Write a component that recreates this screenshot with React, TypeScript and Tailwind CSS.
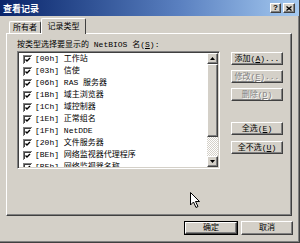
import React from 'react';

const rows = [
  ['[00h]', '工作站'],
  ['[03h]', '信使'],
  ['[06h]', 'RAS 服务器'],
  ['[1Bh]', '域主浏览器'],
  ['[1Ch]', '域控制器'],
  ['[1Eh]', '正常组名'],
  ['[1Fh]', 'NetDDE'],
  ['[20h]', '文件服务器'],
  ['[BEh]', '网络监视器代理程序'],
  ['[BFh]', '网络监视器名称'],
];

const raised =
  'border border-t-white border-l-white border-r-[#404040] border-b-[#404040] shadow-[inset_-1px_-1px_#808080] bg-[#d4d0c8]';

const Check = () => (
  <svg width="9" height="9" viewBox="0 0 9 9" className="shrink-0">
    <rect x="0" y="0" width="9" height="9" fill="#808080" />
    <rect x="1" y="1" width="8" height="8" fill="#ffffff" />
    <rect x="1" y="1" width="7" height="7" fill="#404040" />
    <rect x="2" y="2" width="6" height="6" fill="#ffffff" />
    <path d="M2.5 4.5 L4 6 L7 3" stroke="#000" strokeWidth="1.4" fill="none" />
  </svg>
);

function Btn({
  children,
  disabled,
  className = '',
}: {
  children: React.ReactNode;
  disabled?: boolean;
  className?: string;
}) {
  return (
    <div
      className={`${raised} flex items-center justify-center text-[8px] leading-none ${
        disabled ? 'text-[#808080] [text-shadow:1px_1px_0_#fff]' : 'text-black'
      } ${className}`}
    >
      {children}
    </div>
  );
}

export default function App() {
  return (
    <div className="relative w-[300px] h-[243px] overflow-hidden bg-[#d4d0c8] border-r border-b border-r-[#404040] border-b-[#404040] shadow-[inset_-1px_-1px_#808080] font-['Liberation_Mono','Noto_Sans_CJK_SC',monospace] text-black">
      {/* title bar */}
      <div className="h-[16px] flex items-center justify-between pl-[3px] pr-[4px] bg-gradient-to-r from-[#0a246a] via-[#5a80c0] via-60% to-[#a6caf0]">
        <span className="text-white font-bold text-[9px] leading-none font-['Noto_Sans_CJK_SC',sans-serif]">查看记录</span>
        <div className="flex items-center gap-[2px]">
          <div className={`${raised} w-[11px] h-[10px] flex items-center justify-center text-[8px] font-bold leading-none font-['Liberation_Sans',sans-serif]`}>?</div>
          <div className={`${raised} w-[12px] h-[10px] flex items-center justify-center`}>
            <svg width="6" height="5" viewBox="0 0 6 5">
              <path d="M0.5 0.5 L5.5 4.5 M5.5 0.5 L0.5 4.5" stroke="#000" strokeWidth="1.3" />
            </svg>
          </div>
        </div>
      </div>

      {/* tabs */}
      <div className="pl-[6px] pt-[2px]">
        <div className="flex items-end h-[15px] pl-[3px]">
          <div className="h-[12px] w-[32px] border-t border-l border-r border-t-white border-l-white border-r-[#404040] rounded-t-[2px] flex items-center justify-center text-[8px] leading-none">
            所有者
          </div>
          <div className="relative z-10 -mb-[1px] h-[16px] w-[45px] bg-[#d4d0c8] border-t border-l border-r border-t-white border-l-white border-r-[#404040] rounded-t-[2px] flex items-center justify-center text-[8px] leading-none">
            记录类型
          </div>
        </div>

        {/* panel */}
        <div className={`${raised} w-[286px] h-[183px] pl-[10px] pt-[5px]`}>
          <div className="h-[12px] text-[8px] leading-[12px] whitespace-nowrap">
            按类型选择要显示的 NetBIOS 名(<u>S</u>):
          </div>
          <div className="flex">
            {/* list */}
            <div className="w-[203px] h-[118px] flex border border-t-[#808080] border-l-[#808080] border-r-white border-b-white shadow-[inset_1px_1px_#404040,inset_-1px_-1px_#d4d0c8] p-[1px]">
              <div className="flex-1 bg-white overflow-hidden">
                {rows.map(([code, name]) => (
                  <div key={code} className="h-[12px] flex items-center pl-[4px] gap-[3px] text-[8px] leading-none whitespace-nowrap">
                    <Check />
                    <span>{code} {name}</span>
                  </div>
                ))}
              </div>
              <div className="w-[11px] flex flex-col bg-[#ece9e2]">
                <div className={`${raised} h-[11px] flex items-center justify-center`}>
                  <svg width="5" height="3" viewBox="0 0 5 3"><path d="M2.5 0 L5 3 L0 3 Z" fill="#000" /></svg>
                </div>
                <div className={`${raised} h-[73px]`} />
                <div className="flex-1 bg-[repeating-conic-gradient(#ffffff_0_25%,#d4d0c8_0_50%)] bg-[length:2px_2px]" />
                <div className={`${raised} h-[11px] flex items-center justify-center`}>
                  <svg width="5" height="3" viewBox="0 0 5 3"><path d="M0 0 L5 0 L2.5 3 Z" fill="#000" /></svg>
                </div>
              </div>
            </div>

            {/* action buttons */}
            <div className="ml-[11px] pt-[1px] flex flex-col">
              <Btn className="w-[52px] h-[13px]">添加(<u>A</u>)...</Btn>
              <Btn disabled className="w-[52px] h-[13px] mt-[5px]">修改(<u>E</u>)...</Btn>
              <Btn disabled className="w-[52px] h-[13px] mt-[5px]">删除(<u>D</u>)</Btn>
              <Btn className="w-[52px] h-[13px] mt-[21px]">全选(<u>E</u>)</Btn>
              <Btn className="w-[52px] h-[13px] mt-[6px]">全不选(<u>U</u>)</Btn>
            </div>
          </div>
        </div>
      </div>

      {/* dialog buttons */}
      <div className="flex justify-end gap-[3px] pr-[6px] mt-[5px]">
        <div className="w-[54px] h-[14px] border border-black flex">
          <Btn className="flex-1">确定</Btn>
        </div>
        <Btn className="w-[52px] h-[14px]">取消</Btn>
      </div>

      {/* mouse pointer */}
      <svg className="absolute left-[190px] top-[192px]" width="11" height="17" viewBox="0 0 11 17">
        <path d="M0.5 0.5 L0.5 13 L3.5 10 L6 15.5 L8 14.5 L5.5 9.5 L9.5 9.5 Z" fill="#fff" stroke="#000" strokeWidth="1" strokeLinejoin="miter" />
      </svg>
    </div>
  );
}
